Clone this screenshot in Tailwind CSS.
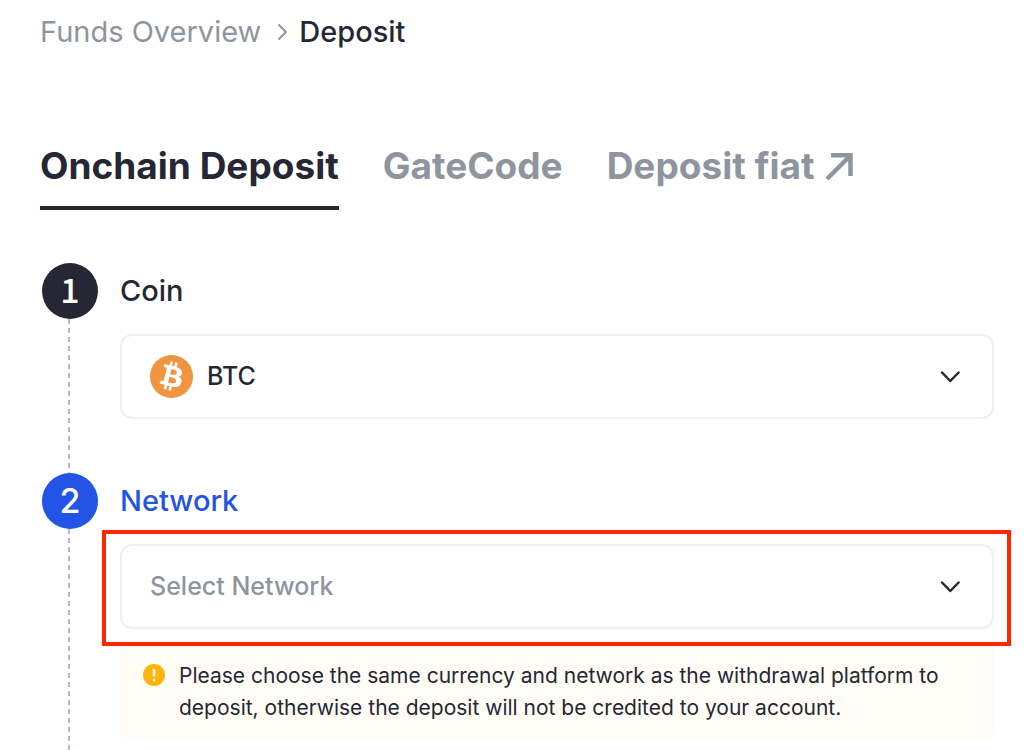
<!DOCTYPE html>
<html lang="en">
<head>
    <meta charset="UTF-8">
    <meta name="viewport" content="width=device-width, initial-scale=1.0">
    <title>Deposit</title>
    <script src="https://cdn.jsdelivr.net/npm/@tailwindcss/browser@4"></script>
</head>
<body class="bg-white font-['Inter',sans-serif] text-[#252834] overflow-x-hidden">
    <main class="pl-10 pr-[30px] pt-3">
        <!-- Breadcrumb -->
        <nav aria-label="Breadcrumb" class="flex items-center text-[29px] leading-10">
            <a href="#" class="text-[#8e959f]">Funds Overview</a>
            <svg class="w-3 h-5 ml-4 mr-2.5 shrink-0" viewBox="0 0 12 20" fill="none" stroke="#8e959f" stroke-width="2" stroke-linecap="round" stroke-linejoin="round">
                <path d="M2 3l7 7-7 7"/>
            </svg>
            <span class="font-medium" aria-current="page">Deposit</span>
        </nav>

        <!-- Tabs -->
        <nav aria-label="Deposit type" class="flex mt-[86px] gap-11 text-[37px] leading-[56px] font-bold text-[#8e959f]">
            <a href="#" class="text-[#252834] border-b-4 border-[#252834] pb-3">Onchain Deposit</a>
            <a href="#">GateCode</a>
            <a href="#" class="flex items-start">Deposit fiat
                <svg class="w-8 h-8 mt-3 ml-2" viewBox="0 0 32 32" fill="none" stroke="#8e959f" stroke-width="4.500">
                    <path d="M8 5.200H27.500V26M27 6L4 29"/>
                </svg>
            </a>
        </nav>

        <!-- Steps -->
        <ol class="mt-[53px]">
            <li class="relative flex gap-[22px] pl-0.5 pb-[54px]">
                <div class="absolute left-[28px] top-14 bottom-0 w-0.5 bg-[repeating-linear-gradient(#b3b7c6_0_5px,transparent_5px_9px)]"></div>
                <div class="relative flex items-center justify-center w-14 h-14 pb-1 shrink-0 rounded-full bg-[#252834] text-white text-[34px] leading-none font-medium font-['Noto_Sans_CJK_SC',sans-serif]">1</div>
                <div class="flex-1 min-w-0">
                    <label for="coin" class="block text-[29px] leading-14 font-medium">Coin</label>
                    <div class="relative mt-[15px]">
                        <select id="coin" class="appearance-none block w-full h-[85px] pl-[85px] pr-20 border-2 border-[#efeff4] rounded-xl bg-white text-[25px] font-medium">
                            <option>BTC</option>
                        </select>
                        <svg class="absolute left-[30px] top-[21px] w-[43px] h-[43px] pointer-events-none" viewBox="0 0 64 64">
                            <circle cx="32" cy="32" r="32" fill="#f09441"/>
                            <path fill="#fff" transform="translate(-3.200 -3.200) scale(1.100)" d="M46.100 27.400c.6-4.300-2.600-6.500-7-8l1.400-5.700-3.500-.9-1.400 5.600-2.800-.7 1.400-5.600-3.500-.9-1.400 5.700-2.200-.5-4.800-1.200-.9 3.700s2.600.6 2.500.6c1.400.4 1.700 1.300 1.600 2l-3.900 15.700c-.2.400-.6 1.100-1.600.8 0 .1-2.500-.6-2.500-.6l-1.700 4 4.500 1.100 2.500.7-1.400 5.700 3.500.9 1.400-5.700 2.800.7-1.400 5.700 3.500.9 1.400-5.700c6 1.100 10.500.7 12.400-4.700 1.500-4.400-.1-6.900-3.200-8.500 2.300-.5 4-2 4.500-5.100zm-8 11.200c-1.100 4.400-8.400 2-10.800 1.400l1.900-7.700c2.400.6 10 1.800 8.900 6.300zm1.100-11.300c-1 4-7.100 2-9.100 1.500l1.800-7c2 .5 8.300 1.400 7.300 5.500z"/>
                        </svg>
                        <svg class="absolute right-8 top-[31px] w-6 h-6 pointer-events-none" viewBox="0 0 24 24" fill="none" stroke="#252834" stroke-width="2.500" stroke-linecap="round" stroke-linejoin="round">
                            <path d="M4 7.500l8.300 8.500L20.600 7.500"/>
                        </svg>
                    </div>
                </div>
            </li>

            <li class="relative flex gap-[22px] pl-0.5 pb-[11px]">
                <div class="absolute left-[28px] top-14 bottom-0 w-0.5 bg-[repeating-linear-gradient(#b3b7c6_0_5px,transparent_5px_9px)]"></div>
                <div class="relative flex items-center justify-center w-14 h-14 shrink-0 rounded-full bg-[#2354e6] text-white text-[34px] leading-none font-medium">2</div>
                <div class="flex-1 min-w-0">
                    <label for="network" class="block text-[29px] leading-14 font-medium text-[#2354e6]">Network</label>
                    <div class="relative mt-[15px]">
                        <select id="network" class="appearance-none block w-full h-[85px] pl-7 pr-20 border-2 border-[#efeff4] rounded-xl bg-white text-[25px] font-medium text-[#8e959f]">
                            <option>Select Network</option>
                        </select>
                        <svg class="absolute right-8 top-[31px] w-6 h-6 pointer-events-none" viewBox="0 0 24 24" fill="none" stroke="#252834" stroke-width="2.500" stroke-linecap="round" stroke-linejoin="round">
                            <path d="M4 7.500l8.300 8.500L20.600 7.500"/>
                        </svg>
                        <!-- Highlight frame -->
                        <div class="absolute z-10 -left-[18px] -right-[17px] -top-[14px] -bottom-[17px] border-4 border-[#ff2600] pointer-events-none"></div>
                    </div>

                    <div class="flex gap-[14px] mt-[15px] pl-[23px] pr-5 pt-4 pb-[15px] rounded-lg bg-[#fffdf5]">
                        <svg class="w-[22px] h-[22px] mt-1 shrink-0" viewBox="0 0 22 22">
                            <circle cx="11" cy="11" r="11" fill="#ffb40b"/>
                            <path d="M11 6v5.500M11 15.800v.2" stroke="#fff" stroke-width="2.500" stroke-linecap="round"/>
                        </svg>
                        <p class="text-[21px] leading-8">Please choose the same currency and network as the withdrawal platform to deposit, otherwise the deposit will not be credited to your account.</p>
                    </div>
                </div>
            </li>
        </ol>
    </main>
</body>
</html>
